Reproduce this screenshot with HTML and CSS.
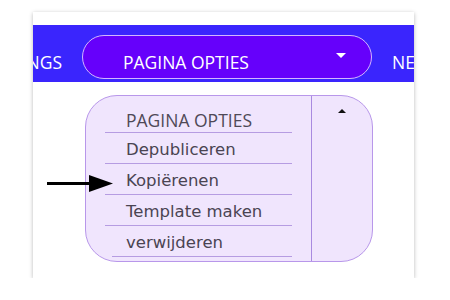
FILE: index.html
```html
<!DOCTYPE html>
<html>
<head>
<meta charset="utf-8">
<link rel="stylesheet" href="styles.css">
</head>
<body>
<div class="card">
  <div class="navbar">
    <span class="nav-item first">SETTINGS</span>
    <div class="pill">
      <span class="pill-label">PAGINA OPTIES</span>
      <span class="caret-down"></span>
    </div>
    <span class="nav-item">NEW PAGE</span>
  </div>
  <div class="dropdown">
    <ul class="menu">
      <li class="menu-head">PAGINA OPTIES</li>
      <li>Depubliceren</li>
      <li>Kopiërenen</li>
      <li>Template maken</li>
      <li class="last">verwijderen</li>
    </ul>
    <div class="side">
      <span class="caret-up"></span>
    </div>
  </div>
  <svg class="pointer" width="70" height="20" viewBox="0 0 70 20">
    <rect x="0" y="7" width="46" height="3" fill="#000"/>
    <polygon points="42,0 66,8.5 42,17" fill="#000"/>
  </svg>
</div>
</body>
</html>
```

FILE: styles.css
```css
html, body {
  margin: 0;
  padding: 0;
  background: #ffffff;
}

.card {
  position: relative;
  margin: 12px 0 0 33px;
  width: 381px;
  height: 266px;
  background: #ffffff;
  box-shadow: 0 1px 4px rgba(0, 0, 0, 0.28);
  padding-top: 13px;
  box-sizing: border-box;
  overflow: hidden;
}

.navbar {
  display: flex;
  align-items: baseline;
  gap: 20px;
  height: 57px;
  padding-top: 10px;
  box-sizing: border-box;
  background: #3a25fd;
  overflow: hidden;
  white-space: nowrap;
  font-family: "Open Sans", "Liberation Sans", sans-serif;
  font-size: 17.5px;
  color: #ffffff;
}

.nav-item {
  flex-shrink: 0;
}

.nav-item.first {
  margin-left: -50px;
}

.pill {
  flex-shrink: 0;
  display: flex;
  align-items: center;
  justify-content: space-between;
  width: 290px;
  height: 44px;
  box-sizing: border-box;
  padding: 0 25px 0 40px;
  background: #6600fb;
  border: 1px solid #d2b6ff;
  border-radius: 22px;
}

.pill-label {
  padding-top: 9px;
  font-size: 17.5px;
  color: #ffffff;
}

.caret-down {
  width: 0;
  height: 0;
  border-left: 5px solid transparent;
  border-right: 5px solid transparent;
  border-top: 5px solid #ffffff;
  margin-top: -3px;
}

.dropdown {
  display: flex;
  margin: 13px 0 0 52px;
  width: 288px;
  height: 167px;
  box-sizing: border-box;
  background: #f0e5fd;
  border: 1px solid #b897ea;
  border-radius: 32px;
}

.menu {
  list-style: none;
  margin: 0;
  padding: 6px 0 0 0;
  width: 226px;
  box-sizing: border-box;
  border-right: 1px solid #a98ae0;
  font-family: "DejaVu Sans", sans-serif;
  font-size: 16.5px;
  color: #4a4452;
}

.menu li {
  margin: 0 19px 0 19px;
  padding: 3px 0 0 21px;
  line-height: 27px;
  border-bottom: 1px solid #b69ce2;
}

.menu li.menu-head {
  padding-top: 6px;
  line-height: 24px;
  font-family: "Open Sans", sans-serif;
  font-size: 17.5px;
  color: #4f4957;
}

.menu li.last {
  margin-left: 26px;
  padding-left: 14px;
}

.side {
  flex: 1;
  display: flex;
  justify-content: center;
  padding-top: 13px;
}

.caret-up {
  width: 0;
  height: 0;
  border-left: 4px solid transparent;
  border-right: 4px solid transparent;
  border-bottom: 4px solid #111111;
}

.pointer {
  position: absolute;
  left: 14px;
  top: 163px;
}
```
